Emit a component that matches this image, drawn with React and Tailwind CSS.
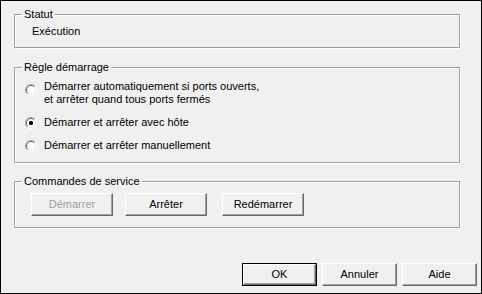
import React from "react";

const Radio = ({ checked }) => (
    <svg width="12" height="12" viewBox="0 0 12 12" className="shrink-0">
        <circle cx="6" cy="6" r="5" fill="#ffffff" />
        <path d="M2.1 9.9 A5.5 5.5 0 0 1 9.9 2.1" fill="none" stroke="#a0a0a0" strokeWidth="1" />
        <path d="M2.8 9.2 A4.5 4.5 0 0 1 9.2 2.8" fill="none" stroke="#696969" strokeWidth="1" />
        <path d="M9.9 2.1 A5.5 5.5 0 0 1 2.1 9.9" fill="none" stroke="#ffffff" strokeWidth="1" />
        <path d="M9.2 2.8 A4.5 4.5 0 0 1 2.8 9.2" fill="none" stroke="#e3e3e3" strokeWidth="1" />
        {checked && <rect x="4" y="4" width="4" height="4" rx="1.5" fill="#000000" />}
    </svg>
);

const Btn = ({ children, disabled, isDefault, className = "" }) => {
    const face = (
        <div
            className={
                "flex h-full w-full items-center justify-center border border-t-white border-l-white border-r-[#696969] border-b-[#696969] bg-[#f0f0f0] shadow-[inset_-1px_-1px_0_#a0a0a0] " +
                (disabled ? "text-[#a0a0a0]" : "text-black")
            }
        >
            {children}
        </div>
    );
    return (
        <div className={"h-[23px] shrink-0 " + (isDefault ? "border border-black " : "") + className}>
            {face}
        </div>
    );
};

const Group = ({ title, className = "", children }) => (
    // etched windows group box: grey line with a white line one pixel off
    <fieldset
        className={
            "w-[446px] border border-[#a0a0a0] shadow-[inset_1px_1px_0_#fff,1px_1px_0_#fff] " + className
        }
    >
        <legend className="ml-[7px] bg-[#f0f0f0] px-[2px] leading-[13px]">{title}</legend>
        {children}
    </fieldset>
);

export default function App() {
    return (
        <div
            className="flex h-[294px] w-[482px] flex-col border border-black bg-[#f0f0f0] pl-[13px] text-[11px] leading-[13px] text-black"
            style={{ fontFamily: '"Liberation Sans", Arial, sans-serif' }}
        >
            <Group title="Statut" className="mt-[7px] h-[40px]">
                <div className="pt-[4px] pl-[17px]">Exécution</div>
            </Group>

            <Group title="Règle démarrage" className="mt-[13px] h-[102px]">
                <div className="flex flex-col gap-[10px] pt-[6px] pl-[10px]">
                    <div className="flex items-start gap-[7px]">
                        <div className="mt-[4px]">
                            <Radio />
                        </div>
                        <div>
                            Démarrer automatiquement si ports ouverts,
                            <br />
                            et arrêter quand tous ports fermés
                        </div>
                    </div>
                    <div className="flex items-center gap-[7px]">
                        <Radio checked />
                        <div>Démarrer et arrêter avec hôte</div>
                    </div>
                    <div className="flex items-center gap-[7px]">
                        <Radio />
                        <div>Démarrer et arrêter manuellement</div>
                    </div>
                </div>
            </Group>

            <Group title="Commandes de service" className="mt-[12px] h-[53px]">
                <div className="flex pt-[5px] pl-[16px]">
                    <Btn disabled className="w-[82px]">Démarrer</Btn>
                    <Btn className="ml-[12px] w-[82px]">Arrêter</Btn>
                    <Btn className="ml-[15px] w-[82px]">Redémarrer</Btn>
                </div>
            </Group>

            <div className="mt-[35px] flex justify-end gap-[5px] pr-[4px]">
                <Btn isDefault className="w-[75px]">OK</Btn>
                <Btn className="w-[75px]">Annuler</Btn>
                <Btn className="w-[75px]">Aide</Btn>
            </div>
        </div>
    );
}
